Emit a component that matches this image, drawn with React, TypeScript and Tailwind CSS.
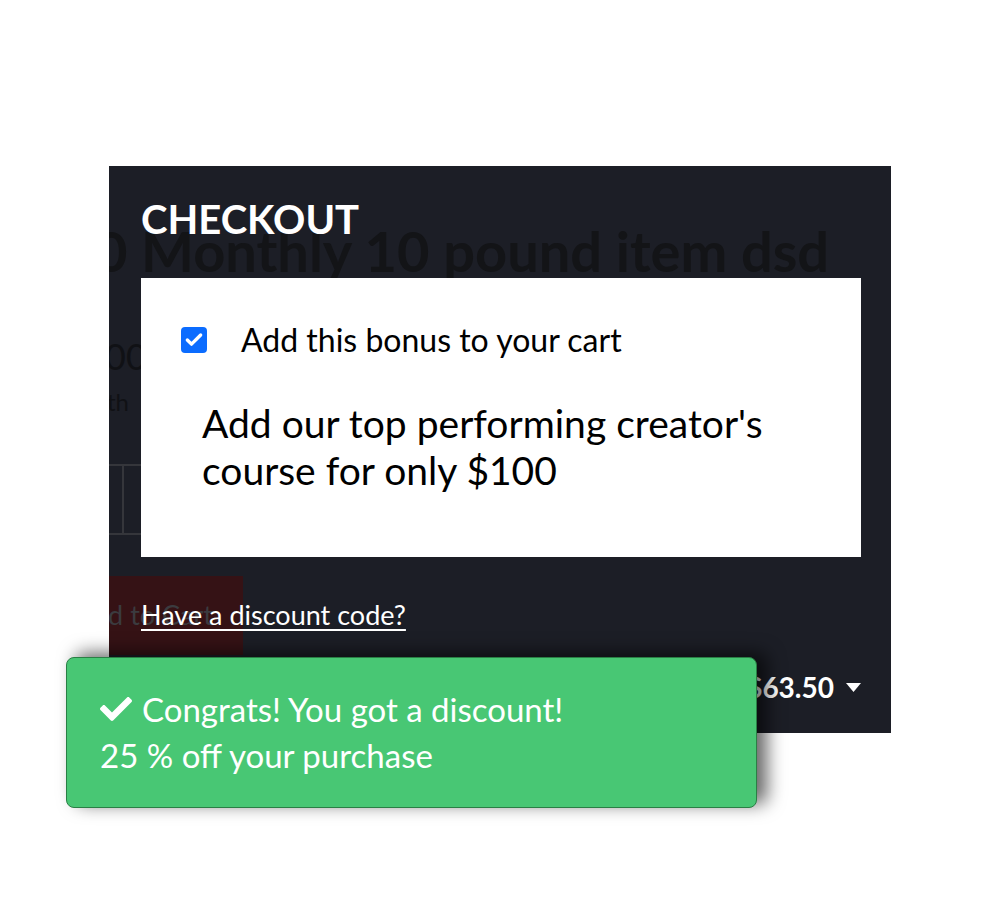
import { Check } from 'lucide-react';
import { FaCheck } from 'react-icons/fa';

const font = { fontFamily: 'Lato, "Noto Sans", sans-serif' };

// the page underneath, seen through the modal
const Ghost = () => (
  <div className="pointer-events-none absolute inset-0">
    <p className="absolute left-[-14px] top-[57px] whitespace-nowrap text-[56px] font-bold leading-none text-[#131417]">
      0 Monthly 10 pound item dsd
    </p>
    <p className="absolute left-[-4px] top-[172px] text-[36px] leading-none text-[#101115]">00</p>
    <p className="absolute left-[-2px] top-[224px] text-[24px] leading-none text-[#101115]">th</p>
    <div className="absolute left-0 top-[298px] flex h-[71px] w-[40px] border-y-2 border-[#35363b]">
      <div className="w-[15px] border-r-2 border-[#35363b]" />
    </div>
    <div className="absolute left-0 top-[410px] flex h-[79px] w-[134px] items-center bg-[#351215]">
      <span className="ml-[-34px] whitespace-nowrap text-[27px] text-[#3b3b3f]">Add to Cart</span>
    </div>
  </div>
);

const Toast = () => (
  <div className="absolute left-[66px] top-[657px] flex h-[151px] w-[691px] flex-col rounded-lg border border-[#2a7f45] bg-[#48c774] px-[33px] pt-[28px] text-white shadow-[10px_-4px_18px_rgba(0,0,0,0.6)]">
    <div className="flex items-center gap-[10px] text-[33px] leading-[46px]">
      <FaCheck className="h-[32px] w-[32px] shrink-0" />
      <span>Congrats! You got a discount!</span>
    </div>
    <p className="text-[33px] leading-[46px]">25 % off your purchase</p>
  </div>
);

export default function App() {
  return (
    <div className="relative h-[900px] w-[1000px] bg-white pt-[166px]" style={font}>
      <div className="relative ml-[109px] h-[567px] w-[782px] overflow-hidden bg-[#1c1e26]">
        <Ghost />
        <div className="relative flex h-full flex-col pl-[32px] pr-[30px] pt-[33px]">
          <h1 className="text-[40px] font-bold leading-none text-white">CHECKOUT</h1>
          <div className="mt-[39px] h-[279px] bg-white pl-[40px] pt-[46px] text-black">
            <label className="flex items-center gap-[34px]">
              <span className="flex h-[26px] w-[26px] items-center justify-center rounded-[4px] bg-[#0b6cff]">
                <Check className="h-[20px] w-[20px] text-white" strokeWidth={4} />
              </span>
              <span className="text-[32px] leading-none">Add this bonus to your cart</span>
            </label>
            <p className="mt-[44px] pl-[21px] text-[39px] leading-[47px]">
              Add our top performing creator's
              <br />
              course for only $100
            </p>
          </div>
          <a className="mt-[44px] w-fit text-[27px] leading-none text-white underline underline-offset-4">
            Have a discount code?
          </a>
          <div className="mt-auto mb-[32px] flex items-center justify-end gap-[12px] text-white">
            <span className="text-[28px] font-bold leading-none">$63.50</span>
            <svg width="15" height="9" viewBox="0 0 15 9">
              <path d="M0 0h15L7.5 9z" fill="white" />
            </svg>
          </div>
        </div>
      </div>
      <Toast />
    </div>
  );
}
